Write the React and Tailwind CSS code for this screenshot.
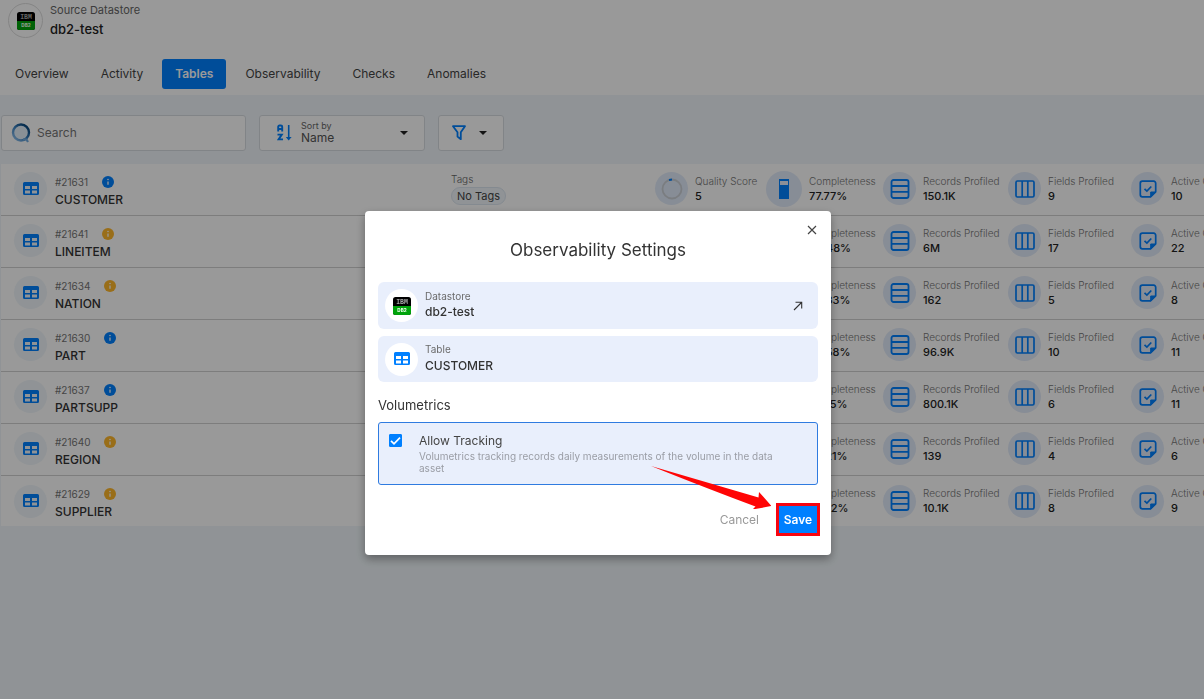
import React from "react";

const tabs = ["Overview", "Activity", "Tables", "Observability", "Checks", "Anomalies"];

const rows = [
  { id: "#21631", name: "CUSTOMER", tone: "blue", tags: "No Tags", score: "5", completeness: "77.77%", records: "150.1K", fields: "9", checks: "10" },
  { id: "#21641", name: "LINEITEM", tone: "amber", tags: "No Tags", score: "5", completeness: "93.48%", records: "6M", fields: "17", checks: "22" },
  { id: "#21634", name: "NATION", tone: "amber", tags: "No Tags", score: "5", completeness: "83.33%", records: "162", fields: "5", checks: "8" },
  { id: "#21630", name: "PART", tone: "blue", tags: "No Tags", score: "5", completeness: "89.58%", records: "96.9K", fields: "10", checks: "11" },
  { id: "#21637", name: "PARTSUPP", tone: "blue", tags: "No Tags", score: "5", completeness: "77.75%", records: "800.1K", fields: "6", checks: "11" },
  { id: "#21640", name: "REGION", tone: "amber", tags: "No Tags", score: "5", completeness: "78.21%", records: "139", fields: "4", checks: "6" },
  { id: "#21629", name: "SUPPLIER", tone: "amber", tags: "No Tags", score: "5", completeness: "87.52%", records: "10.1K", fields: "8", checks: "9" },
];

function Db2Logo() {
  return (
    <svg viewBox="0 0 18 18" className="size-[18px]" aria-hidden="true">
      <rect width="18" height="18" rx="2.500" fill="#000" />
      <path d="M0 9h18v6.500a2.500 2.500 0 0 1-2.500 2.500h-13A2.500 2.500 0 0 1 0 15.500z" fill="#00a30b" />
      <text x="9" y="7.400" textAnchor="middle" fontSize="6.500" fontFamily="Liberation Mono, monospace" fontWeight="700" fill="#a8a8a8">IBM</text>
      <text x="9" y="15.200" textAnchor="middle" fontSize="4.600" fontFamily="Inter, sans-serif" fontWeight="800" fill="#e4ffe4">DB2</text>
    </svg>
  );
}

function TableIcon() {
  return (
    <svg viewBox="0 0 16 14" className="h-[14px] w-4" aria-hidden="true">
      <path
        fill="#0080ff"
        fillRule="evenodd"
        d="M1.500 0h13A1.500 1.500 0 0 1 16 1.500v10a1.500 1.500 0 0 1-1.500 1.500h-13A1.500 1.500 0 0 1 0 11.500v-10A1.500 1.500 0 0 1 1.500 0zM2 4v3h5V4zM9 4v3h5V4zM2 8.500v3h5v-3zM9 8.500v3h5v-3z"
      />
    </svg>
  );
}

function InfoIcon({ tone }) {
  return (
    <svg viewBox="0 0 12 12" className="size-3" aria-hidden="true">
      <circle cx="6" cy="6" r="6" fill={tone === "blue" ? "#0080ff" : "#ffb72b"} />
      <path d="M6 5.400v3.400" stroke="#fff" strokeWidth="1.300" />
      <circle cx="6" cy="3.500" r="0.800" fill="#fff" />
    </svg>
  );
}

function ScoreRing() {
  return (
    <svg viewBox="0 0 22 22" className="size-[22px]" fill="none" aria-hidden="true">
      <circle cx="11" cy="11" r="9.500" stroke="#ccd0d6" strokeWidth="1.800" />
      <path d="M8 2L11 1.500" stroke="#0080ff" strokeWidth="2.200" />
    </svg>
  );
}

function GaugeIcon() {
  return (
    <svg viewBox="0 0 10 20" className="h-5 w-[10px]" aria-hidden="true">
      <rect x="0.500" y="0.500" width="9" height="19" fill="#e8effc" stroke="#0080ff" />
      <rect width="10" height="2" fill="#0080ff" />
      <rect y="6" width="10" height="14" fill="#0080ff" />
    </svg>
  );
}

function RowsIcon() {
  return (
    <svg viewBox="0 0 20 20" className="size-5" fill="none" stroke="#0080ff" strokeWidth="1.800" aria-hidden="true">
      <rect x="1.500" y="1" width="17" height="18" rx="2" />
      <path d="M1.500 7h17M1.500 12.800h17" />
    </svg>
  );
}

function ColumnsIcon() {
  return (
    <svg viewBox="0 0 20 18" className="h-[18px] w-5" fill="none" stroke="#0080ff" strokeWidth="1.700" aria-hidden="true">
      <rect x="1" y="1" width="18" height="16" rx="1.500" />
      <path d="M7.200 1v16M12.800 1v16" />
    </svg>
  );
}

function CheckNoteIcon() {
  return (
    <svg viewBox="0 0 18 18" className="size-[18px]" fill="none" stroke="#0080ff" strokeWidth="1.700" aria-hidden="true">
      <path d="M11.500 16.800H3.300A2 2 0 0 1 1.300 14.800V3.200A2 2 0 0 1 3.300 1.200H14.700A2 2 0 0 1 16.700 3.200V11.800z" strokeLinejoin="round" />
      <path d="M11.700 16.800v-4.800h5z" fill="#0080ff" strokeWidth="1" />
      <path d="M5.500 8.800l2.400 2.300 4.400-4.600" />
    </svg>
  );
}

function SearchLogo() {
  return (
    <svg viewBox="0 0 20 20" className="size-5" fill="none" aria-hidden="true">
      <defs>
        <linearGradient id="ring" x1="1" y1="0" x2="0" y2="1">
          <stop offset="0.150" stopColor="#0b4a80" />
          <stop offset="0.550" stopColor="#3f87c8" />
          <stop offset="1" stopColor="#9cc8f0" />
        </linearGradient>
      </defs>
      <circle cx="10" cy="9.500" r="8" fill="#e4f0fb" stroke="url(#ring)" strokeWidth="2.400" />
      <path d="M12 16.300l3.500 0.200 1.500 2.500" stroke="#73acdf" strokeWidth="2.200" />
    </svg>
  );
}

function SortIcon() {
  return (
    <svg viewBox="0 0 16 18" className="h-[18px] w-4" fill="none" stroke="#0080ff" strokeWidth="1.900" aria-hidden="true">
      <path d="M1.200 7.500V2.800a1.300 1.300 0 0 1 1.300-1.300h1.400a1.300 1.300 0 0 1 1.300 1.300v4.700M1.200 5H5.200" />
      <path d="M0.500 10.600h4.300L1.600 15.400H6" />
      <path d="M11.700 1v14" strokeWidth="1.600" />
      <path d="M8.800 13h5.800l-2.900 3.500z" fill="#0080ff" stroke="none" />
    </svg>
  );
}

function FilterIcon() {
  return (
    <svg viewBox="0 0 14 16" className="h-4 w-[14px]" fill="none" stroke="#0080ff" strokeWidth="1.800" strokeLinejoin="round" aria-hidden="true">
      <path d="M1 1.200h12L8.800 7.200v7L5.500 11.500V7.200z" />
    </svg>
  );
}

function Caret() {
  return (
    <svg viewBox="0 0 8 4" className="h-1 w-2" aria-hidden="true">
      <path d="M0 0h8L4 4z" fill="#222" />
    </svg>
  );
}

function Metric({ icon, label, value, large }) {
  return (
    <div className="flex items-center gap-[7px]">
      <span
        className={
          large
            ? "flex size-9 shrink-0 items-center justify-center rounded-full bg-[#e2ebfa]"
            : "flex size-[33px] shrink-0 items-center justify-center rounded-full bg-[#e2ebfa]"
        }
      >
        {icon}
      </span>
      <div className="whitespace-nowrap">
        <div className="text-[10px] leading-[15px] font-light text-[#757575]">{label}</div>
        <div className="text-[11px] leading-[15px] font-medium text-[#222]">{value}</div>
      </div>
    </div>
  );
}

function TableRow({ row }) {
  return (
    <li className="grid h-[52px] grid-cols-[437px_204px_111px_117px_125px_123px_140px] items-center border-b border-[#d0d0d0] pb-[2px] pl-[13px] last:h-[50px] last:border-b-0 last:pb-0">
      <div className="flex items-center gap-2">
        <span className="flex size-[33px] shrink-0 items-center justify-center rounded-full bg-[#f0f6fb]">
          <TableIcon />
        </span>
        <div className="pt-1">
          <div className="flex items-center gap-[14px] text-[10px] leading-[18px] text-[#757575]">
            {row.id}
            <InfoIcon tone={row.tone} />
          </div>
          <div className="text-xs leading-[18px] font-medium text-[#333]">{row.name}</div>
        </div>
      </div>
      <div className="flex flex-col items-start">
        <span className="text-[10px] leading-[15px] font-light text-[#666]">Tags</span>
        <span className="rounded-full border border-[#dde6f0] bg-[#f0f6fb] px-[5px] text-[11px] leading-4 text-[#444]">{row.tags}</span>
      </div>
      <Metric icon={<ScoreRing />} label="Quality Score" value={row.score} />
      <Metric icon={<GaugeIcon />} label="Completeness" value={row.completeness} large />
      <Metric icon={<RowsIcon />} label="Records Profiled" value={row.records} />
      <Metric icon={<ColumnsIcon />} label="Fields Profiled" value={row.fields} />
      <Metric icon={<CheckNoteIcon />} label="Active Checks" value={row.checks} />
    </li>
  );
}

function SettingsDialog() {
  return (
    <div className="fixed inset-0 flex items-start justify-center overflow-auto bg-black/40 pt-[211px] pr-2">
      <div role="dialog" aria-modal="true" aria-labelledby="dialog-title" className="relative w-full max-w-[466px] rounded bg-white px-[13px] pt-7 pb-[19px] shadow-[0_4px_10px_rgba(0,0,0,0.35)]">
        <button type="button" aria-label="Close" className="absolute top-[14px] right-[14px] flex size-[10px] items-center justify-center">
          <svg viewBox="0 0 10 10" className="size-[10px]" stroke="#444" strokeWidth="1.200">
            <path d="M1 1l8 8M9 1l-8 8" />
          </svg>
        </button>
        <h2 id="dialog-title" className="text-center text-[17px] leading-[22px] text-[#333]">Observability Settings</h2>

        <div className="mt-[21px] flex h-[47px] items-center gap-[7px] rounded-md bg-[#e9effc] px-[7px]">
          <span className="flex size-[33px] shrink-0 items-center justify-center rounded-full bg-white"><Db2Logo /></span>
          <div className="flex-1 pb-[3px]">
            <div className="text-[10px] leading-[15px] text-[#6b6b6b]">Datastore</div>
            <div className="text-xs leading-[15px] font-medium text-[#333]">db2-test</div>
          </div>
          <a href="#datastore" aria-label="Open datastore" className="mr-2">
            <svg viewBox="0 0 10 10" className="size-[10px]" fill="none" stroke="#333" strokeWidth="1.100">
              <path d="M1 9l7.500-7.500M2.500 1.300H8.700v6.200" />
            </svg>
          </a>
        </div>

        <div className="mt-[7px] flex h-[46px] items-center gap-[7px] rounded-md bg-[#e9effc] px-[7px]">
          <span className="flex size-[33px] shrink-0 items-center justify-center rounded-full bg-white"><TableIcon /></span>
          <div className="pb-[3px]">
            <div className="text-[10px] leading-[15px] text-[#6b6b6b]">Table</div>
            <div className="text-xs leading-[17px] font-medium text-[#333]">CUSTOMER</div>
          </div>
        </div>

        <h3 className="mt-[14px] text-[13px] leading-[18px] text-[#333]">Volumetrics</h3>
        <label htmlFor="allow-tracking" className="mt-2 flex h-[63px] gap-[17px] rounded-[3px] border border-[#2f7be0] bg-[#e9effc] px-[10px] pt-2">
          <span className="mt-[3px] grid size-[13px] shrink-0">
            <input id="allow-tracking" type="checkbox" defaultChecked className="peer col-start-1 row-start-1 size-[13px] appearance-none rounded-[1px] border border-[#777] checked:border-[#0080ff] checked:bg-[#0080ff]" />
            <svg viewBox="0 0 13 13" className="pointer-events-none invisible col-start-1 row-start-1 size-[13px] peer-checked:visible" fill="none" stroke="#fff" strokeWidth="1.700">
              <path d="M2 6.800l3 3 6-6.200" />
            </svg>
          </span>
          <span className="pr-5">
            <span className="block text-xs leading-[19px] text-[#444]">Allow Tracking</span>
            <span className="block text-[10px] leading-3 text-[#9a9da5]">Volumetrics tracking records daily measurements of the volume in the data asset</span>
          </span>
        </label>

        <div className="mt-[18px] -mr-[2px] flex items-center justify-end gap-[17px]">
          <button type="button" className="text-xs text-[#999]">Cancel</button>
          <button type="button" className="h-[33px] w-11 border-[3px] border-[#f80510] bg-[#0080ff] text-xs font-semibold text-white">Save</button>
        </div>

        <svg viewBox="0 0 120 44" className="pointer-events-none absolute top-[254px] left-[286px] h-11 w-[120px]" aria-hidden="true">
          <path d="M0 1L107.500 32.500L108 27L120.500 41L101.500 44.500L104.500 41.500Q60 25 0 1z" fill="#ff0505" />
        </svg>
      </div>
    </div>
  );
}

export default function App() {
  return (
    <div className="min-h-screen overflow-hidden bg-[#f0f6fa] font-[Inter,sans-serif]">
      <header className="bg-white pb-[6px]">
        <div className="flex h-[59px] items-start gap-[7px] pt-[3px] pl-2">
          <span className="flex size-[35px] shrink-0 items-center justify-center rounded-full border border-[#ddd]"><Db2Logo /></span>
          <div>
            <p className="text-[11px] leading-[14px] text-[#666]">Source Datastore</p>
            <h1 className="mt-[3px] text-[13px] leading-[18px] font-medium text-[#222]">db2-test</h1>
          </div>
        </div>
        <nav className="flex gap-[6px] pl-[2px]">
          {tabs.map((tab) => (
            <a
              key={tab}
              href={`#${tab.toLowerCase()}`}
              className={
                tab === "Tables"
                  ? "flex h-[30px] items-center rounded-[3px] bg-[#0080ff] px-[13px] text-xs font-semibold text-white"
                  : "flex h-[30px] items-center px-[13px] text-xs text-[#444]"
              }
            >
              {tab}
            </a>
          ))}
        </nav>
      </header>

      <section className="flex items-center gap-[13px] px-px pt-5 pb-[13px]">
        <label className="flex h-9 w-[245px] items-center gap-[6px] rounded-[3px] border border-[#d8dde2] bg-white px-[9px]">
          <SearchLogo />
          <input type="search" aria-label="Search" placeholder="Search" className="min-w-0 flex-1 text-xs text-[#333] outline-none placeholder:text-[#757575]" />
        </label>
        <button type="button" className="flex h-9 w-[166px] items-center rounded-[3px] border border-[#d8dde2] bg-white pr-4 pl-[17px] text-left">
          <SortIcon />
          <span className="ml-2 flex-1 pb-[2px]">
            <span className="block text-[9px] leading-3 text-[#666]">Sort by</span>
            <span className="block text-xs leading-3 text-[#555]">Name</span>
          </span>
          <Caret />
        </button>
        <button type="button" aria-label="Filter" className="flex h-9 w-[66px] items-center justify-between rounded-[3px] border border-[#d8dde2] bg-white pr-4 pl-[13px]">
          <FilterIcon />
          <Caret />
        </button>
      </section>

      <ul className="ml-px bg-white">
        {rows.map((row) => (
          <TableRow key={row.id} row={row} />
        ))}
      </ul>

      <SettingsDialog />
    </div>
  );
}
